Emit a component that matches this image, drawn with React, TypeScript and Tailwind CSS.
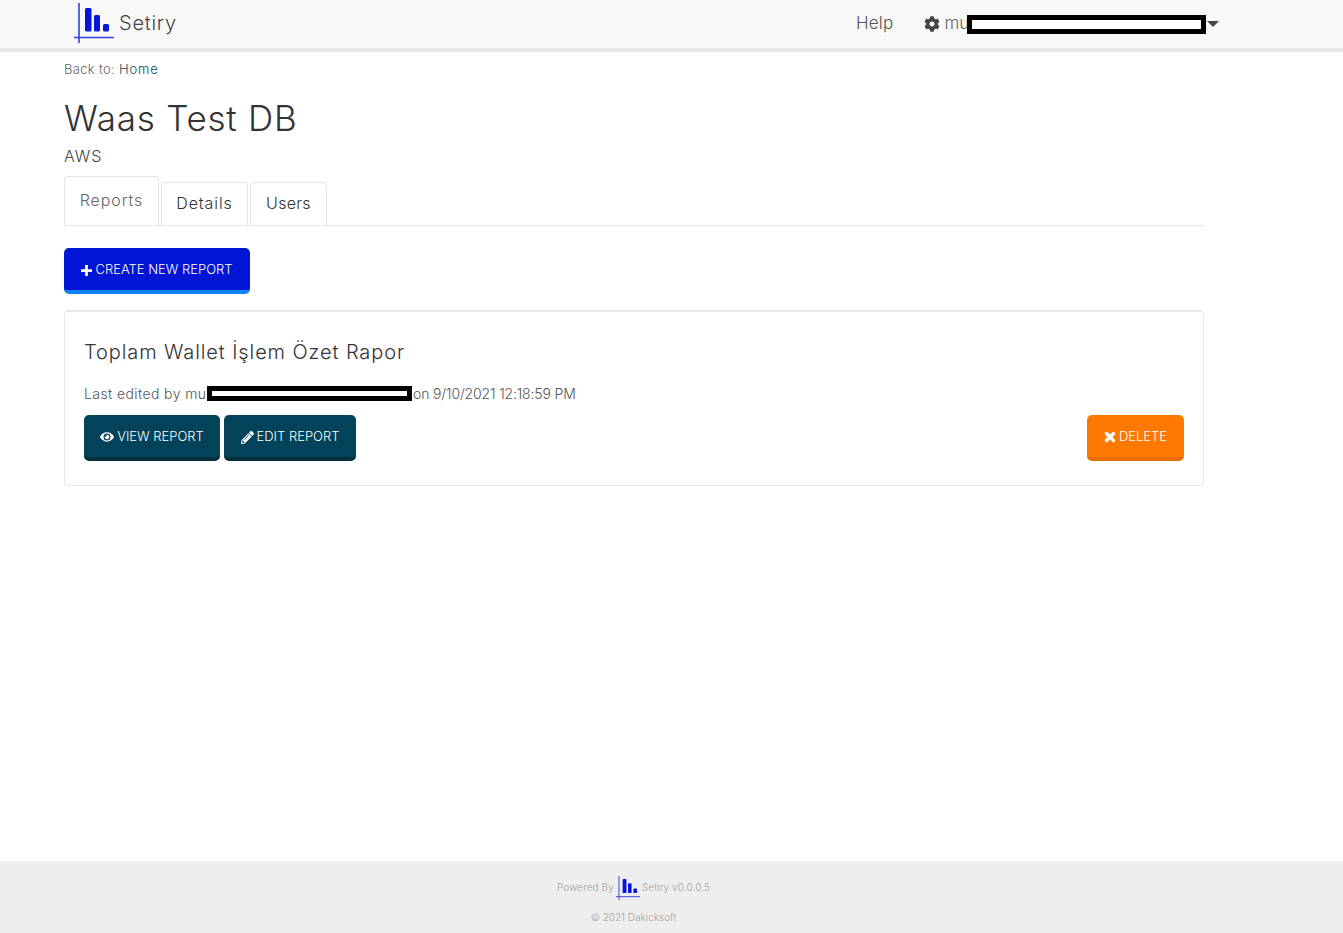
import { FaCog, FaEye, FaPencilAlt } from 'react-icons/fa'

function Logo({ className }: { className: string }) {
  return (
    <svg viewBox="0 0 40 40" className={className} fill="none">
      <path d="M5 0V40M0 34.500H40" stroke="#3040e0" strokeWidth="1.600" />
      <rect x="11" y="5" width="6.500" height="23.500" rx="1.500" fill="#0a14d8" />
      <rect x="20" y="12" width="6" height="16.500" rx="1.500" fill="#0a14d8" />
      <rect x="29" y="21" width="6" height="7.500" rx="1.500" fill="#0a14d8" />
    </svg>
  )
}

function PlusIcon() {
  return (
    <svg viewBox="0 0 12 12" className="h-[11px] w-[11px]" fill="currentColor">
      <path d="M0 4.500h4.500V0h3v4.500H12v3H7.500V12h-3V7.500H0z" />
    </svg>
  )
}

function TimesIcon() {
  return (
    <svg viewBox="0 0 12 12" className="h-[12px] w-[12px]" stroke="currentColor" strokeWidth="3.400" strokeLinecap="round">
      <path d="M2.500 2.500l7 7M9.500 2.500l-7 7" />
    </svg>
  )
}

function ActionButton({ label, icon, className }: { label: string; icon: React.ReactNode; className: string }) {
  return (
    <button className={`flex h-[46px] items-center justify-center gap-[3px] rounded-[5px] border-b-4 pt-[2px] text-[13px] text-white ${className}`}>
      {icon}
      {label}
    </button>
  )
}

export default function App() {
  return (
    <div className="flex min-h-[933px] flex-col bg-white font-['Inter','Open_Sans',sans-serif] font-light text-[#333]">
      {/* Navbar */}
      <nav className="flex h-[52px] items-center border-b-4 border-[#e7e7e7] bg-[#f8f8f8] pl-[74px]">
        <Logo className="mb-[2px] h-[40px] w-[40px]" />
        <span className="mb-[2px] ml-[5px] text-[20px] tracking-[0.75px] text-[#444]">Setiry</span>
        <span className="ml-[679px] text-[17px] tracking-[0.2px] text-[#555]">Help</span>
        <FaCog className="ml-[31px] h-[16px] w-[16px] text-[#444]" />
        <span className="ml-[4px] w-[23px] whitespace-nowrap text-[17px] text-[#666]">mu</span>
        {/* redaction box sits on top of the name */}
        <div className="relative h-[19px] w-[239px] border-[5px] border-black bg-white" />
        <div className="ml-[1px] h-0 w-0 border-x-[6px] border-t-[6px] border-x-transparent border-t-[#444]" />
      </nav>

      {/* Main */}
      <main className="ml-[64px] flex w-[1140px] flex-1 flex-col pt-[8px]">
        <p className="text-[13px] leading-[18px] tracking-[0.3px] text-[#666]">
          Back to: <span className="tracking-[0.9px] text-[#0f4c5c]">Home</span>
        </p>
        <h1 className="mt-[18px] text-[35px] leading-[44px] tracking-[0.75px] text-[#333]">Waas Test DB</h1>
        <p className="mt-[4px] text-[16px] leading-[24px] tracking-[0.9px] text-[#444]">AWS</p>

        <div className="mt-[8px] flex items-end gap-[2px] border-b border-[#e5e5e5]">
          <div className="flex h-[49px] w-[95px] items-center justify-center rounded-t border border-b-0 border-[#e5e5e5] pb-[2px] text-[16px] tracking-[0.9px] text-[#666]">
            Reports
          </div>
          <div className="flex h-[43px] w-[87px] items-center justify-center rounded-t border border-b-0 border-[#e5e5e5] pb-[2px] text-[16px] tracking-[0.9px]">
            Details
          </div>
          <div className="flex h-[43px] w-[77px] items-center justify-center rounded-t border border-b-0 border-[#e5e5e5] pb-[2px] text-[16px] tracking-[0.3px]">
            Users
          </div>
        </div>

        <ActionButton
          label="CREATE NEW REPORT"
          icon={<PlusIcon />}
          className="mt-[22px] w-[186px] border-[#0a84ff] bg-[#0214d4]"
        />

        {/* Report card */}
        <section className="mt-[16px] h-[176px] rounded border border-t-2 border-[#e8e8e8] px-[19px] pt-[26px]">
          <h2 className="text-[20px] leading-[28px] tracking-[0.9px] text-[#333]">Toplam Wallet İşlem Özet Rapor</h2>
          <div className="mt-[15px] flex h-[24px] items-center text-[14px] text-[#555]">
            <span className="w-[123px] whitespace-nowrap tracking-[0.4px]">Last edited by mu</span>
            <div className="relative h-[15px] w-[205px] border-[5px] border-black bg-white" />
            <span className="ml-[1px] tracking-[-0.15px]">on 9/10/2021 12:18:59 PM</span>
          </div>
          <div className="mt-[10px] flex gap-[4px]">
            <ActionButton
              label="VIEW REPORT"
              icon={<FaEye className="h-[14px] w-[14px]" />}
              className="w-[136px] border-[#02303f] bg-[#024359]"
            />
            <ActionButton
              label="EDIT REPORT"
              icon={<FaPencilAlt className="h-[13px] w-[13px]" />}
              className="w-[132px] border-[#02303f] bg-[#024359]"
            />
            <ActionButton
              label="DELETE"
              icon={<TimesIcon />}
              className="ml-auto w-[97px] border-[#e86c00] bg-[#ff7800]"
            />
          </div>
        </section>
      </main>

      {/* Footer */}
      <footer className="flex h-[72px] flex-col items-center bg-[#eeeeee] pr-[76px] text-[10px] text-[#a3a3a3]">
        <div className="mt-[15px] flex h-[24px] items-center tracking-[0.1px]">
          <span className="mb-[2px]">Powered By</span>
          <Logo className="mx-[2px] h-[24px] w-[24px]" />
          <span className="mb-[2px]">Setiry v0.0.0.5</span>
        </div>
        <p className="mt-[10px] leading-[14px]">© 2021 Dakicksoft</p>
      </footer>
    </div>
  )
}
